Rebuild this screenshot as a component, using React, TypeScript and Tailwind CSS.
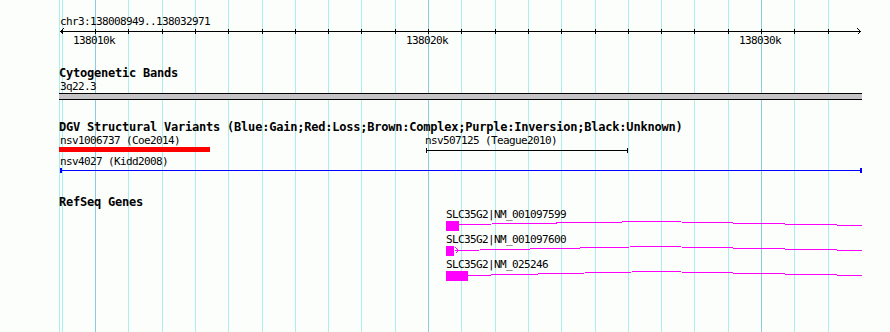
const GRID = [62, 95, 128, 162, 195, 228, 262, 295, 328, 361, 395, 428, 461, 495, 528, 561, 595, 628, 661, 694, 728, 761, 794, 828]
const MAJOR = [95, 428, 761]

// 11px DejaVu Mono squeezed to 6px cells, bold 12px squeezed to 7px cells
const mono = "font-['DejaVu_Sans_Mono','Liberation_Mono',monospace] whitespace-pre text-black"
const small = `${mono} text-[11px] tracking-[-0.62px]`
const bold = `${mono} text-[12px] font-bold leading-[13px] tracking-[-0.22px]`

function Grid() {
  return (
    <svg className="absolute inset-0" width={890} height={332} shapeRendering="crispEdges">
      <line x1={59.5} y1={0} x2={59.5} y2={332} stroke="#aaeeee" />
      {GRID.map((x) => (
        <line
          key={x}
          x1={x + 0.5}
          y1={0}
          x2={x + 0.5}
          y2={332}
          stroke={MAJOR.includes(x) ? '#88ccdd' : '#aaeeee'}
        />
      ))}
    </svg>
  )
}

function Ruler() {
  return (
    <section className="flex h-[60px] flex-col pt-[15px]">
      <span className={`${small} pl-[60px] leading-[13px]`}>chr3:138008949..138032971</span>
      <svg className="block" width={890} height={8} shapeRendering="crispEdges">
        <line x1={60} y1={3.5} x2={861} y2={3.5} stroke="#000" />
        {GRID.map((x) => (
          <line key={x} x1={x + 0.5} y1={1} x2={x + 0.5} y2={6} stroke="#000" />
        ))}
        <polyline points="63.5,0.5 60.5,3.5 63.5,6.5" fill="none" stroke="#000" />
        <polyline points="857.5,0.5 860.5,3.5 857.5,6.5" fill="none" stroke="#000" />
      </svg>
      <div className={`${small} -mt-[2px] flex gap-[291px] pl-[73px] leading-[13px]`}>
        <span>138010k</span>
        <span>138020k</span>
        <span>138030k</span>
      </div>
    </section>
  )
}

function Cytobands() {
  return (
    <section className="flex h-[50px] flex-col pt-[7px]">
      <span className={`${bold} pl-[59px]`}>Cytogenetic Bands</span>
      <span className={`${small} pl-[60px] leading-[13px]`}>3q22.3</span>
      <svg className="block" width={890} height={7} shapeRendering="crispEdges">
        <rect x={59} y={0} width={803} height={7} fill="#c6c3c6" />
        <line x1={59} y1={0.5} x2={862} y2={0.5} stroke="#000" />
        <line x1={59} y1={6.5} x2={862} y2={6.5} stroke="#000" />
      </svg>
    </section>
  )
}

function Variants() {
  return (
    <section className="flex h-[78px] flex-col pt-[11px]">
      <span className={`${bold} pl-[59px]`}>
        DGV Structural Variants (Blue:Gain;Red:Loss;Brown:Complex;Purple:Inversion;Black:Unknown)
      </span>
      <div className={`${small} mt-[1px] flex pl-[60px] leading-[12px]`}>
        <span className="w-[365px]">nsv1006737 (Coe2014)</span>
        <span>nsv507125 (Teague2010)</span>
      </div>
      <svg className="block" width={890} height={6} shapeRendering="crispEdges">
        <rect x={59} y={0} width={151} height={5} fill="#ff0000" />
        {/* unknown type, black */}
        <line x1={426} y1={3.5} x2={628} y2={3.5} stroke="#000" />
        <line x1={426.5} y1={1} x2={426.5} y2={6} stroke="#000" />
        <line x1={627.5} y1={1} x2={627.5} y2={6} stroke="#000" />
      </svg>
      <span className={`${small} mt-[3px] pl-[60px] leading-[12px]`}>nsv4027 (Kidd2008)</span>
      <svg className="block" width={890} height={5} shapeRendering="crispEdges">
        <line x1={60} y1={2.5} x2={862} y2={2.5} stroke="#0000ff" />
        <rect x={60} y={0} width={2} height={5} fill="#0000ff" />
        <rect x={860} y={0} width={2} height={5} fill="#0000ff" />
      </svg>
    </section>
  )
}

const GENES = [
  { name: 'SLC35G2|NM_001097599', w: 13, start: 3, peak: 0, end: 4, arrow: false },
  { name: 'SLC35G2|NM_001097600', w: 8, start: 4, peak: 0, end: 4, arrow: true },
  { name: 'SLC35G2|NM_025246', w: 22, start: 4, peak: 0, end: 4, arrow: false },
]

function Gene({ g }: { g: (typeof GENES)[number] }) {
  return (
    <div className="flex flex-col">
      <span className={`${small} leading-[12px]`}>{g.name}</span>
      <svg className="block" width={416} height={13} shapeRendering="crispEdges">
        <rect x={0} y={0} width={g.w} height={10} fill="#ff00ff" />
        <polyline
          points={`${g.arrow ? 9 : g.w},${g.start + 0.5} 209,${g.peak + 0.5} 416,${g.end + 0.5}`}
          fill="none"
          stroke="#ff00ff"
        />
        {g.arrow && <polyline points="9.5,1.5 12.5,4.5 9.5,7.5" fill="none" stroke="#ff00ff" />}
      </svg>
    </div>
  )
}

function RefSeq() {
  return (
    <section className="flex flex-1 flex-col pt-[8px]">
      <span className={`${bold} pl-[59px]`}>RefSeq Genes</span>
      <div className="ml-[446px] flex flex-col">
        {GENES.map((g) => (
          <Gene key={g.name} g={g} />
        ))}
      </div>
    </section>
  )
}

export default function App() {
  return (
    <div className="relative h-[332px] w-[890px] overflow-hidden bg-[#fcfefc]">
      <Grid />
      <div className="relative flex h-full flex-col">
        <Ruler />
        <Cytobands />
        <Variants />
        <RefSeq />
      </div>
    </div>
  )
}
